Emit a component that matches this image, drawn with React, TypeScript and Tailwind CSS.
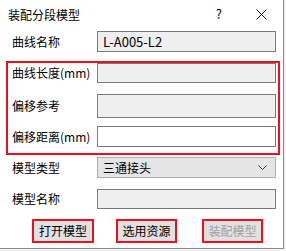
import React from "react";

const font = { fontFamily: '"Noto Sans CJK SC", "Microsoft YaHei", sans-serif' };

function Field({ bg = "bg-[#efefef]", h = "h-[21px]", children }: { bg?: string; h?: string; children?: React.ReactNode }) {
  return (
    <div className={`w-[179px] ${h} ${bg} border border-[#7a7a7a] flex items-center pl-[5px] text-[13px] text-black`}>
      {children}
    </div>
  );
}

function Btn({ label, disabled }: { label: string; disabled?: boolean }) {
  return (
    <div className="h-[24px] border-2 border-[#e81123] bg-[#e1e1e1] flex items-center justify-center">
      <span className={`text-[12px] ${disabled ? "text-[#a0a0a0]" : "text-black"}`}>{label}</span>
    </div>
  );
}

export default function App() {
  return (
    <div className="w-[286px] h-[251px] bg-[#f3f3f3]" style={font}>
      <div className="w-[284px] h-[249px] bg-white border-r border-b border-[#8a8a8a] flex flex-col">
        {/* title bar */}
        <div className="h-[28px] flex items-center text-[12px] text-black">
          <span className="pl-[8px] pt-[1px]">装配分段模型</span>
          <span className="ml-auto mr-[34px] text-[13px]">?</span>
          <svg width="11" height="11" viewBox="0 0 11 11" className="mr-[16px]">
            <path d="M0.5 0.5 L10.5 10.5 M10.5 0.5 L0.5 10.5" stroke="#111" strokeWidth="1" />
          </svg>
        </div>
        {/* row 1 */}
        <div className="mt-[3px] flex items-center h-[21px]">
          <span className="w-[97px] pl-[12px] text-[12px] text-black">曲线名称</span>
          <Field>L-A005-L2</Field>
        </div>
        {/* red group */}
        <div className="mt-[9px] ml-[6px] w-[274px] h-[94px] border-2 border-[#e81123] flex flex-col">
          <div className="flex items-center h-[20px]">
            <span className="w-[89px] pl-[4px] text-[12px] text-black">曲线长度(mm)</span>
            <Field h="h-[20px]" />
          </div>
          <div className="mt-[11px] flex items-center h-[24px]">
            <span className="w-[89px] pl-[4px] text-[12px] text-black">偏移参考</span>
            <Field h="h-[24px]" />
          </div>
          <div className="mt-[8px] flex items-center h-[21px]">
            <span className="w-[89px] pl-[4px] text-[12px] text-black">偏移距离(mm)</span>
            <Field bg="bg-white" />
          </div>
        </div>
        {/* combobox */}
        <div className="mt-[2px] flex items-center h-[21px]">
          <span className="w-[97px] pl-[12px] text-[12px] text-black">模型类型</span>
          <div className="w-[179px] h-[21px] bg-[#e5e5e5] border border-[#adadad] flex items-center pl-[5px] pr-[8px] text-[12px] text-black">
            <span>三通接头</span>
            <svg width="9" height="5" viewBox="0 0 9 5" className="ml-auto">
              <path d="M0.5 0.5 L4.5 4.5 L8.5 0.5" stroke="#333" strokeWidth="1" fill="none" />
            </svg>
          </div>
        </div>
        {/* row 6 */}
        <div className="mt-[11px] flex items-center h-[20px]">
          <span className="w-[97px] pl-[12px] text-[12px] text-black">模型名称</span>
          <Field h="h-[20px]" />
        </div>
        {/* buttons */}
        <div className="mt-[10px] flex">
          <div className="ml-[32px] w-[62px]"><Btn label="打开模型" /></div>
          <div className="ml-[22px] w-[61px]"><Btn label="选用资源" /></div>
          <div className="ml-[25px] w-[61px]"><Btn label="装配模型" disabled /></div>
        </div>
      </div>
    </div>
  );
}
